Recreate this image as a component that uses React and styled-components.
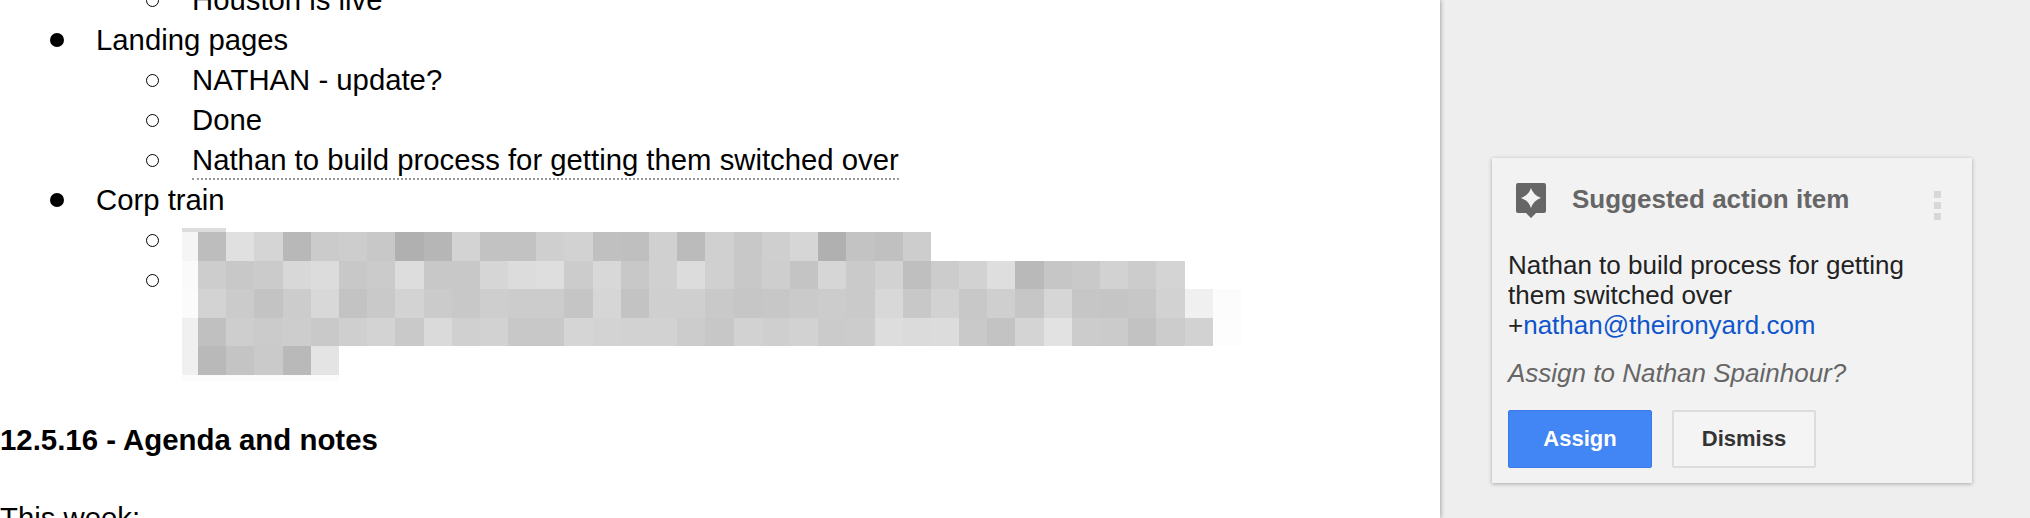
import React from 'react';
import styled, { createGlobalStyle } from 'styled-components';

const GlobalStyle = createGlobalStyle`
  html, body { margin: 0; padding: 0; background: #eeeeee; overflow: hidden; }
  body { font-family: "Liberation Sans", Arial, sans-serif; }
`;

const Page = styled.div`
  display: flex;
  width: 2030px;
  height: 518px;
  overflow: hidden;
`;

const Doc = styled.main`
  width: 1440px;
  height: 518px;
  flex: none;
  background: #fff;
  color: #000;
  font-size: 29.3px;
  line-height: 40px;
  overflow: hidden;
  box-shadow: 1px 0 4px rgba(0, 0, 0, 0.3);
`;

const Clip = styled.div`
  margin-top: -20px;
`;

const Row = styled.div`
  display: flex;
  height: 40px;
  padding-left: ${(p) => (p.$sub ? 144 : 48)}px;
`;

const Marker = styled.span`
  width: 48px;
  flex: none;
  display: flex;
  align-items: center;
`;

const Dot = styled.i`
  display: block;
  width: 14px;
  height: 14px;
  margin-left: 2px;
  border-radius: 50%;
  background: #000;
`;

const Ring = styled.i`
  display: block;
  width: 13px;
  height: 13px;
  margin-left: 2px;
  box-sizing: border-box;
  border-radius: 50%;
  border: 1.5px solid #000;
`;

const Flagged = styled.span`
  border-bottom: 2px dotted #999;
  height: 38px;
`;

const Redaction = styled.div`
  margin-left: 182px;
  margin-top: -72px;
  height: 154px;
`;

const Strip = styled.div`
  width: 44px;
  height: 4px;
  background: #dcdcdc;
`;

const PixelRow = styled.div`
  display: flex;
  height: 28.6px;
`;

const Pixel = styled.span`
  flex: none;
  width: ${(p) => (p.$edge ? 16 : 28.2)}px;
  background: #${(p) => p.$shade};
`;

const Ghost = styled.div`
  width: 157px;
  height: 6px;
  background: #fbfbfb;
`;

const Heading = styled.h2`
  margin: 38px 0 0;
  font-size: 29.4px;
  line-height: 40px;
  font-weight: 700;
`;

const Para = styled.p`
  margin: 38px 0 0;
`;

const Side = styled.aside`
  flex: 1;
  padding: 158px 0 0 52px;
`;

const Card = styled.section`
  width: 480px;
  height: 325px;
  box-sizing: border-box;
  padding: 23px 16px 0;
  background: #f2f2f3;
  box-shadow: 0 1px 4px rgba(0, 0, 0, 0.3);
`;

const CardHead = styled.header`
  display: flex;
  align-items: flex-start;
  height: 69px;
`;

const Badge = styled.svg`
  width: 30px;
  height: 35px;
  margin: 2px 0 0 8px;
  flex: none;
`;

const CardTitle = styled.h3`
  margin: 0 0 0 26px;
  flex: 1;
  font-size: 26px;
  line-height: 36px;
  font-weight: 700;
  color: #666;
`;

const Kebab = styled.div`
  display: flex;
  flex-direction: column;
  gap: 4px;
  margin: 10px 15px 0 0;
`;

const KebabDot = styled.i`
  display: block;
  width: 7px;
  height: 7px;
  background: #d8d8d8;
`;

const Body = styled.p`
  margin: 0;
  max-width: 420px;
  font-size: 26px;
  line-height: 30px;
  color: #222;
`;

const Mail = styled.a`
  color: #1155cc;
  text-decoration: none;
`;

const Question = styled.p`
  margin: 18px 0 0;
  font-size: 26px;
  line-height: 30px;
  font-style: italic;
  color: #666;
`;

const Buttons = styled.div`
  display: flex;
  gap: 20px;
  margin-top: 22px;
`;

const Button = styled.button`
  width: 144px;
  height: 58px;
  padding: 0;
  box-sizing: border-box;
  border-radius: 2px;
  font-family: inherit;
  font-size: 22px;
  font-weight: 700;
  color: ${(p) => (p.$primary ? '#fff' : '#333')};
  background: ${(p) => (p.$primary ? '#4285f4' : '#f4f4f4')};
  border: ${(p) => (p.$primary ? '1px solid #3b78e7' : '2px solid #dcdcdc')};
`;

const outline = [
  { text: 'Houston is live', sub: true },
  { text: 'Landing pages' },
  { text: 'NATHAN - update?', sub: true },
  { text: 'Done', sub: true },
  { text: 'Nathan to build process for getting them switched over', sub: true, flagged: true },
  { text: 'Corp train' },
  { text: '', sub: true },
  { text: '', sub: true },
];

const pixels = [
  ['f5', 'bd', 'e0', 'd5', 'b8', 'cb', 'cd', 'c8', 'b0', 'b6', 'd3', 'c2', 'c2', 'cf', 'd2', 'c0', 'bf', 'd0', 'bb', 'd0', 'c8', 'cf', 'd6', 'b0', 'c3', 'c0', 'cd'],
  ['fa', 'cd', 'c8', 'cb', 'd8', 'dc', 'c8', 'cb', 'dd', 'c8', 'c8', 'd6', 'dc', 'de', 'cc', 'd8', 'c8', 'd0', 'dc', 'd0', 'c8', 'ce', 'c4', 'd6', 'ca', 'd2', 'bf', 'cc', 'd2', 'de', 'b9', 'c6', 'c9', 'd2', 'cc', 'd4'],
  ['fb', 'd3', 'cb', 'c3', 'cc', 'd8', 'c3', 'c9', 'd3', 'cb', 'c8', 'ce', 'cc', 'cc', 'c5', 'd6', 'c3', 'cf', 'cf', 'c9', 'c6', 'c7', 'ca', 'cc', 'ca', 'd8', 'c8', 'd2', 'c8', 'cf', 'c6', 'd6', 'c6', 'c5', 'c7', 'd2', 'f0', 'fc'],
  ['f0', 'c0', 'ce', 'cb', 'cd', 'c9', 'cf', 'd3', 'c9', 'da', 'd0', 'd2', 'c8', 'c8', 'd5', 'd3', 'd2', 'd2', 'cc', 'c7', 'd2', 'cf', 'd2', 'cb', 'cc', 'dd', 'db', 'dc', 'c9', 'c3', 'd4', 'e2', 'cc', 'cb', 'c2', 'cc', 'd2', 'fd'],
  ['f0', 'b9', 'c4', 'ca', 'b9', 'e4'],
];

const App = () => (
  <Page>
    <GlobalStyle />
    <Doc>
      <Clip>
        {outline.map((item, i) => (
          <Row key={i} $sub={item.sub}>
            <Marker>{item.sub ? <Ring /> : <Dot />}</Marker>
            {item.flagged ? <Flagged>{item.text}</Flagged> : item.text}
          </Row>
        ))}
        <Redaction>
          <Strip />
          {pixels.map((row, r) => (
            <PixelRow key={r}>
              {row.map((shade, c) => (
                <Pixel key={c} $edge={c === 0} $shade={shade.repeat(3)} />
              ))}
            </PixelRow>
          ))}
          <Ghost />
        </Redaction>
        <Heading>12.5.16 - Agenda and notes</Heading>
        <Para>This week:</Para>
      </Clip>
    </Doc>
    <Side>
      <Card>
        <CardHead>
          <Badge viewBox="0 0 30 35">
            <path
              fill="#666"
              d="M2 0h26a2 2 0 0 1 2 2v26a2 2 0 0 1-2 2h-8l-5 5-5-5H2a2 2 0 0 1-2-2V2a2 2 0 0 1 2-2z"
            />
            <path fill="#f2f2f3" d="M15 5Q17.5 12.5 25 15 17.5 17.5 15 25 12.5 17.5 5 15 12.5 12.5 15 5z" />
          </Badge>
          <CardTitle>Suggested action item</CardTitle>
          <Kebab>
            <KebabDot />
            <KebabDot />
            <KebabDot />
          </Kebab>
        </CardHead>
        <Body>
          Nathan to build process for getting them switched over
          <br />+<Mail href="#">nathan@theironyard.com</Mail>
        </Body>
        <Question>Assign to Nathan Spainhour?</Question>
        <Buttons>
          <Button $primary>Assign</Button>
          <Button>Dismiss</Button>
        </Buttons>
      </Card>
    </Side>
  </Page>
);

export default App;
